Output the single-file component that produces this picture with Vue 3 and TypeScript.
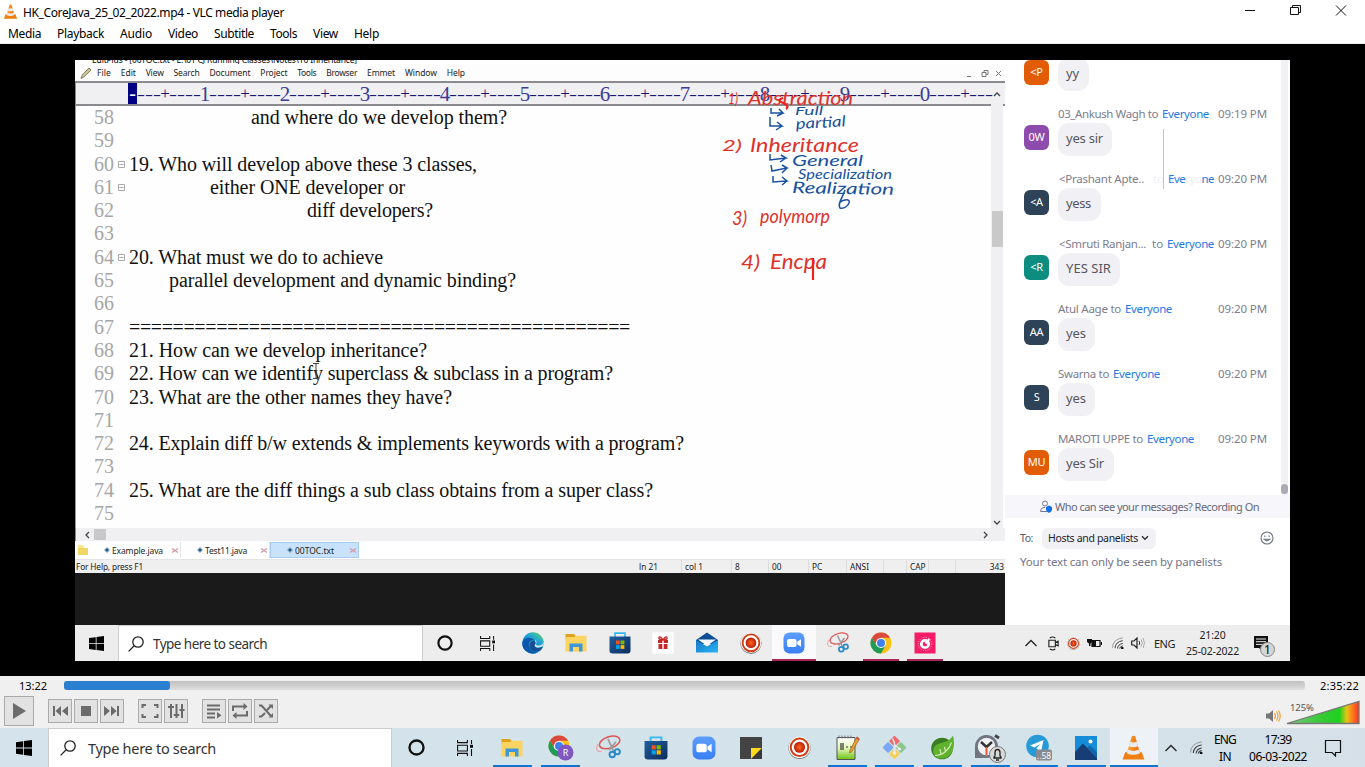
<script setup lang="ts">
import type { Directive } from 'vue'

// Tracks a run of text so that it spans the given width in pixels.
const vFit: Directive<HTMLElement, number | undefined> = {
  mounted(el, { value }) {
    const count = (el.textContent ?? '').length
    if (!value || !count) return
    const natural = el.getBoundingClientRect().width
    el.style.letterSpacing = `${(value - natural) / count}px`
  },
}

interface Label { text: string; w: number }
interface CodeLine { no: number; text?: string; indent?: number; w?: number; fold?: boolean }
interface Message {
  initials: string; color: string; name?: string; nameW?: number
  wide?: boolean; erased?: boolean; time?: string; text: string; w: number; bubble: number
}
interface Task { icon: string; size?: number; state?: string }
interface Note { text: string; x: number; y: number; size: number; w: number; tilt?: number }

const menus: Label[] = [
  { text: 'Media', w: 33 }, { text: 'Playback', w: 47 }, { text: 'Audio', w: 32 }, { text: 'Video', w: 30 },
  { text: 'Subtitle', w: 40 }, { text: 'Tools', w: 27 }, { text: 'View', w: 25 }, { text: 'Help', w: 25 },
]
const editorMenus: Label[] = [
  { text: 'File', w: 14 }, { text: 'Edit', w: 15 }, { text: 'View', w: 18 }, { text: 'Search', w: 26 },
  { text: 'Document', w: 41 }, { text: 'Project', w: 27 }, { text: 'Tools', w: 19 }, { text: 'Browser', w: 31 },
  { text: 'Emmet', w: 28 }, { text: 'Window', w: 32 }, { text: 'Help', w: 18 },
]
const ruler: string[] = Array.from({ length: 107 }, (_, i) => {
  const n = i + 1
  if ((n + 1) % 10 === 0) return String(((n + 1) / 10) % 10)
  return (n + 1) % 5 === 0 ? '+' : '-'
})
const lines: CodeLine[] = [
  { no: 58, text: 'and where do we develop them?', indent: 122, w: 256 },
  { no: 59 },
  { no: 60, text: '19. Who will develop above these 3 classes,', w: 348, fold: true },
  { no: 61, text: 'either ONE developer or', indent: 81, w: 195, fold: true },
  { no: 62, text: 'diff developers?', indent: 178, w: 126 },
  { no: 63 },
  { no: 64, text: '20. What must we do to achieve', w: 254, fold: true },
  { no: 65, text: 'parallel development and dynamic binding?', indent: 40, w: 347 },
  { no: 66 },
  { no: 67, text: '='.repeat(46), w: 501 },
  { no: 68, text: '21. How can we develop inheritance?', w: 298 },
  { no: 69, text: '22. How can we identify superclass & subclass in a program?', w: 484 },
  { no: 70, text: '23. What are the other names they have?', w: 323 },
  { no: 71 },
  { no: 72, text: '24. Explain diff b/w extends & implements keywords with a program?', w: 555 },
  { no: 73 },
  { no: 74, text: '25. What are the diff things a sub class obtains from a super class?', w: 524 },
  { no: 75 },
]
const tabs: Label[] = [
  { text: 'Example.java', w: 51 }, { text: 'Test11.java', w: 42 }, { text: '00TOC.txt', w: 39 },
]
const status = ['ln 21', 'col 1', '8', '00', 'PC', 'ANSI', '', 'CAP', '', '343']

const redNotes: Note[] = [
  { text: '1)', x: 728, y: 104, size: 15, w: 10 },
  { text: 'Abstraction', x: 748, y: 105, size: 19, w: 105 },
  { text: '2)', x: 722, y: 151, size: 16, w: 20 },
  { text: 'Inheritance', x: 750, y: 152, size: 19, w: 109 },
  { text: '3)', x: 732, y: 225, size: 20, w: 15 },
  { text: 'polymorp', x: 760, y: 223, size: 19, w: 70 },
  { text: '4)', x: 741, y: 269, size: 20, w: 19 },
  { text: 'Encpa', x: 770, y: 269, size: 21, w: 57 },
]
const blueNotes: Note[] = [
  { text: 'Full', x: 795, y: 115, size: 11, w: 28 },
  { text: 'partial', x: 796, y: 129, size: 15, w: 50, tilt: -3 },
  { text: 'General', x: 792, y: 166, size: 15, w: 71 },
  { text: 'Specialization', x: 798, y: 179, size: 13, w: 94 },
  { text: 'Realization', x: 792, y: 193, size: 16, w: 102, tilt: 1 },
]

const messages: Message[] = [
  { initials: '<P', color: 'orange', text: 'yy', w: 13, bubble: 31 },
  { initials: '0W', color: 'purple', name: '03_Ankush Wagh to', nameW: 100, time: '09:19 PM', text: 'yes sir', w: 37, bubble: 54 },
  { initials: '<A', color: 'navy', name: '<Prashant Apte..', nameW: 85, wide: true, erased: true, time: '09:20 PM', text: 'yess', w: 25, bubble: 43 },
  { initials: '<R', color: 'teal', name: '<Smruti Ranjan...', nameW: 87, wide: true, time: '09:20 PM', text: 'YES SIR', w: 45, bubble: 62 },
  { initials: 'AA', color: 'navy', name: 'Atul Aage to', nameW: 63, time: '09:20 PM', text: 'yes', w: 20, bubble: 37 },
  { initials: 'S', color: 'navy', name: 'Swarna to', nameW: 51, time: '09:20 PM', text: 'yes', w: 20, bubble: 37 },
  { initials: 'MU', color: 'orange', name: 'MAROTI UPPE to', nameW: 85, time: '09:20 PM', text: 'yes Sir', w: 38, bubble: 56 },
]

const innerTasks: Task[] = [
  { icon: 'edge' }, { icon: 'folder' }, { icon: 'store' }, { icon: 'gift' }, { icon: 'mail' }, { icon: 'record' },
  { icon: 'zoom', state: 'active' }, { icon: 'snip' }, { icon: 'chrome', state: 'open' }, { icon: 'gauge', state: 'open' },
]
const outerTasks: Task[] = [
  { icon: 'folder', state: 'open' }, { icon: 'chrome-r', size: 27, state: 'open' }, { icon: 'snip', size: 25 },
  { icon: 'store', size: 24 }, { icon: 'zoom', size: 24 }, { icon: 'sticky' }, { icon: 'record', size: 23 },
  { icon: 'notepad', size: 25, state: 'open' }, { icon: 'git', size: 25, state: 'open' }, { icon: 'spring', size: 25, state: 'open' },
  { icon: 'alarm', size: 32, state: 'open' }, { icon: 'telegram', size: 27, state: 'open' }, { icon: 'photos', size: 24, state: 'open' },
  { icon: 'vlc', size: 25, state: 'active' },
]
const controlGroups: string[][] = [['prev', 'stop', 'next'], ['full', 'sliders'], ['list', 'loop', 'shuffle']]
</script>

<template>
  <div class="window">
    <svg class="defs" width="0" height="0">
      <defs>
        <linearGradient id="gEdge" x1="0" y1="1" x2="1" y2="0"><stop offset="0" stop-color="#0b62b8" /><stop offset=".5" stop-color="#1ba0dc" /><stop offset="1" stop-color="#5fd86a" /></linearGradient>
        <linearGradient id="gStore" x1="0" y1="0" x2="1" y2="1"><stop offset="0" stop-color="#1f5f9f" /><stop offset="1" stop-color="#0e2c5c" /></linearGradient>
        <linearGradient id="gZoom" x1="0" y1="0" x2="0" y2="1"><stop offset="0" stop-color="#5c9dff" /><stop offset="1" stop-color="#3a80f5" /></linearGradient>
        <linearGradient id="gMail" x1="0" y1="0" x2="1" y2="1"><stop offset="0" stop-color="#1576c8" /><stop offset="1" stop-color="#28b4f4" /></linearGradient>
        <radialGradient id="gRec"><stop offset="0" stop-color="#ff6a1c" /><stop offset="1" stop-color="#b81c08" /></radialGradient>
        <linearGradient id="gVol"><stop offset="0" stop-color="#7bc87b" /><stop offset=".5" stop-color="#34c934" /><stop offset=".73" stop-color="#1fd21f" /><stop offset=".83" stop-color="#eac315" /><stop offset=".93" stop-color="#ff6a20" /><stop offset="1" stop-color="#ff3018" /></linearGradient>
        <linearGradient id="gNote" x1="0" y1="0" x2="0" y2="1"><stop offset="0" stop-color="#fff" /><stop offset=".5" stop-color="#dff5b4" /><stop offset="1" stop-color="#6cc312" /></linearGradient>
        <linearGradient id="gCone"><stop offset="0" stop-color="#ffa53a" /><stop offset="1" stop-color="#e86a00" /></linearGradient>
      </defs>
      <symbol id="i-start" viewBox="0 0 16 16"><path d="M0 2.2 7.2 1.2V7.6H0ZM8 1.1 16 0V7.6H8ZM0 8.4H7.2V14.8L0 13.8ZM8 8.4H16V16L8 14.9Z" /></symbol>
      <symbol id="i-search" viewBox="0 0 16 16"><circle cx="10" cy="6" r="5.2" fill="none" stroke="#222" stroke-width="1.3" /><path d="M6.2 9.8 .6 15.4" stroke="#222" stroke-width="1.3" /></symbol>
      <symbol id="i-cortana" viewBox="0 0 16 16"><circle cx="8" cy="8" r="6.6" fill="none" stroke="#111" stroke-width="2.2" /></symbol>
      <symbol id="i-taskview" viewBox="0 0 16 16"><path d="M.6 0V2.6H10.4V0M.6 16V13.4H10.4V16M.6 5.2H10.4V11H.6ZM14.5 0V4M14.5 9V16" fill="none" stroke="#111" stroke-width="1.1" /><path d="M13 4.8h3v3h-3z" fill="#111" /></symbol>
      <symbol id="i-edge" viewBox="0 0 22 22"><circle cx="11" cy="11" r="10.7" fill="url(#gEdge)" /><path d="M.4 11C1 5.5 9 4 12.5 8.3 9 7.5 6.5 10 7 13.5 7.5 18 12 21 16 20.3 8 24-.5 18.5.4 11Z" fill="#0c58ad" /><path d="M12.6 8.5C15 11 13 12.3 12.6 13.7 13.2 16.2 17.5 16.7 21 14.5 18 21.5 10.5 20.5 8.5 16.5 6.5 12.5 9 8 12.6 8.5Z" fill="#164d93" /><path d="M12.6 8.5C15 11 13 12.3 12.6 13.7 14 16 18 16 21 13.8L21.6 11 17 8Z" fill="#ededed" opacity=".85" /><path d="M2 6.5C5 .5 14-1.5 19 4.5 23 9.5 21.5 13.2 17.5 13.5 15 13.5 13.5 13 14.2 12 15.5 9 12.5 5.5 8.5 5.3 5.5 5.2 3 6 2 6.5Z" fill="url(#gEdge)" /></symbol>
      <symbol id="i-folder" viewBox="0 0 22 22"><path d="M.5 2H9l2 2.5V7H.5Z" fill="#dfa21a" /><path d="M.5 5H9.5L11 3.8H21.5V19.5H.5Z" fill="#fcd462" /><path d="M4.5 19.5V11.5H17.5V19.5H14V15H8V19.5Z" fill="#3d97d9" /></symbol>
      <symbol id="i-store" viewBox="0 0 22 22"><path d="M6 5V1.2H16V5" fill="none" stroke="#37b7ee" stroke-width="1.7" /><path d="M.5 4.5H21.5V18.5Q21.5 21.5 18.5 21.5H3.5Q.5 21.5.5 18.5Z" fill="url(#gStore)" /><path d="M7 8.5h3.8v3.8H7z" fill="#f25022" /><path d="M11.6 8.5h3.8v3.8h-3.8z" fill="#7fba00" /><path d="M7 13.1h3.8v3.8H7z" fill="#00a4ef" /><path d="M11.6 13.1h3.8v3.8h-3.8z" fill="#ffb900" /></symbol>
      <symbol id="i-gift" viewBox="0 0 22 22"><path d="M.3.3h21.4v21.4H.3z" fill="#fff" /><path d="M6 8h4.3v3H6zM11.7 8H16v3h-4.3zM6.5 12h3.8v5H6.5zM11.7 12h3.8v5h-3.8z" fill="#c5262a" /><path d="M11 8Q6 7.5 7 5.5T11 8Q16 7.5 15 5.5T11 8Z" fill="none" stroke="#c5262a" stroke-width="1.3" /></symbol>
      <symbol id="i-mail" viewBox="0 0 22 22"><path d="M0 8 11 .5 22 8V12H0Z" fill="#0d4d94" /><path d="M0 8 11 14.5 22 8V20.5H0Z" fill="url(#gMail)" /><path d="M2 7.5H20L11 14Z" fill="#f4f8fb" /></symbol>
      <symbol id="i-record" viewBox="0 0 22 22"><circle cx="11" cy="11.3" r="10.6" fill="#777" /><circle cx="11" cy="10.8" r="10.3" fill="#fff" /><circle cx="11" cy="10.8" r="8.4" fill="none" stroke="#cf3d14" stroke-width="1.9" /><circle cx="11" cy="10.8" r="5.3" fill="url(#gRec)" /></symbol>
      <symbol id="i-zoom" viewBox="0 0 22 22"><rect x=".5" y=".5" width="21" height="21" rx="6" fill="url(#gZoom)" /><rect x="4" y="7" width="9.5" height="8" rx="2" fill="#fff" /><path d="M14.2 9.7 18 7.2V14.8L14.2 12.3Z" fill="#fff" /></symbol>
      <symbol id="i-snip" viewBox="0 0 22 22"><g fill="none"><ellipse cx="12" cy="6.5" rx="9.3" ry="5" transform="rotate(-18 12 6.5)" stroke="#e05555" stroke-width="1.3" /><path d="M2 8C-1 12 .5 15 5 14.5" stroke="#eda0a0" stroke-width="1" /><path d="M10.5 3.5 15.3 14M17.5 6 11.5 13.5" stroke="#9a9a9a" stroke-width="1.5" /><circle cx="14.3" cy="17.2" r="2.4" stroke="#2a8ac7" stroke-width="1.7" /><circle cx="18.7" cy="14.7" r="2.3" stroke="#2a8ac7" stroke-width="1.7" /></g></symbol>
      <symbol id="i-chrome" viewBox="0 0 22 22"><circle cx="11" cy="11" r="10.5" fill="#fbc116" /><path d="M20.1 5.75H11V11H5L1.9 5.75A10.5 10.5 0 0 1 20.1 5.75Z" fill="#dc4a3d" /><path d="M1.9 5.75 6.5 13.6 11 15.5 15.5 13.6 11 21.5A10.5 10.5 0 0 1 1.9 5.75Z" fill="#1e9b57" /><circle cx="11" cy="11" r="5.1" fill="#fff" /><circle cx="11" cy="11" r="4" fill="#3f80ec" /></symbol>
      <symbol id="i-chrome-r" viewBox="0 0 27 27"><use href="#i-chrome" x="1" y="1" width="22" height="22" /><circle cx="18.5" cy="18.5" r="8" fill="#7e57c2" /><text x="18.5" y="22" text-anchor="middle" class="badge-letter">R</text></symbol>
      <symbol id="i-gauge" viewBox="0 0 22 22"><path d="M.5.5h21v21H.5z" fill="#f81b66" /><circle cx="11" cy="12" r="3.7" fill="none" stroke="#fff" stroke-width="2.8" /><path d="M11.5 11.5 15.5 7" stroke="#fff" stroke-width="2" /><circle cx="11" cy="12" r="6.7" fill="none" stroke="#ffd5e3" stroke-width=".8" stroke-dasharray="1 1.3" /></symbol>
      <symbol id="i-sticky" viewBox="0 0 22 22"><path d="M0 0h22v11L11 22H0Z" fill="#434343" /><path d="M11 22V11H22Z" fill="#ffda1c" /><path d="M22 11V22H11Z" fill="#3a3a3a" /></symbol>
      <symbol id="i-notepad" viewBox="0 0 25 25"><path d="M2 2.5h18v22H2z" fill="url(#gNote)" stroke="#555" /><path d="M4 .5v3M7 .5v3M10 .5v3M13 .5v3M16 .5v3" stroke="#777" stroke-width="1" /><path d="M6 8v7M8 8v7M11 12h2M15 12h2" stroke="#333" stroke-width="1.2" /><path d="M22 2 24.5 4 17 16.5 14.5 18 15 15Z" fill="#eda22e" stroke="#8d531c" stroke-width=".6" /><path d="M22 1.5 24.5 3.5 23.5 5.2 21 3.3Z" fill="#d94f45" /></symbol>
      <symbol id="i-git" viewBox="0 0 25 25"><g transform="rotate(45 12.5 12.5)"><rect x="4" y="4" width="8" height="8" rx="1" fill="#ed6a6f" /><rect x="13" y="4" width="8" height="8" rx="1" fill="#89c78c" /><rect x="4" y="13" width="8" height="8" rx="1" fill="#78a8f5" /><rect x="13" y="13" width="8" height="8" rx="1" fill="#f5cf58" /></g><path d="M10.5 3.5 12.5 8V18M13 10 17.5 14" fill="none" stroke="#e8e8e8" stroke-width="1.5" /><circle cx="12.5" cy="18" r="1.8" fill="#eee" /><circle cx="17.5" cy="14" r="1.6" fill="#eee" /></symbol>
      <symbol id="i-spring" viewBox="0 0 25 25"><circle cx="12" cy="13.5" r="10.8" fill="#397d22" /><path d="M23 .5C26 12 22 21.5 14 23.3 6 25 1 18 4 12.5 7.5 6 18 9.5 23 .5Z" fill="#5fb22e" /><path d="M5 20.5C13 20.5 19 15 21.5 7.5M11 19.5 10 14M15.5 16.5 14.5 12" fill="none" stroke="#d5ecb4" stroke-width="1.2" /></symbol>
      <symbol id="i-alarm" viewBox="0 0 32 32"><path d="M21 3.5 25 6" stroke="#444" stroke-width="3" /><path d="M1 26V15A11.5 11.5 0 1 1 12.5 26Z" fill="#707580" /><circle cx="12.5" cy="14.5" r="8.7" fill="#f0f2f3" /><path d="M7 10 12.5 15 18 10" fill="none" stroke="#333" stroke-width="2.5" /><path d="M12.5 15V23" stroke="#df5b34" stroke-width="2" /><circle cx="23.5" cy="22.5" r="8" fill="#d9d9d9" stroke="#777" /><path d="M20 26V25L21 24V20.5Q21 17.5 23.5 17.5T26 20.5V24L27 25V26ZM22 28H25" fill="none" stroke="#222" stroke-width="1.3" /></symbol>
      <symbol id="i-telegram" viewBox="0 0 27 27"><circle cx="12.5" cy="12" r="11.3" fill="#279bd8" /><path d="M5 11.5 18.5 6 16 18 11.5 14.5 15 10 9.5 13.5Z" fill="#fff" /><rect x="11" y="15.5" width="16" height="11" rx="2" fill="#858b90" /><text x="19" y="24.5" text-anchor="middle" class="badge-count">..58</text></symbol>
      <symbol id="i-photos" viewBox="0 0 24 24"><path d="M1 0h22v24H1z" fill="#168bd8" /><path d="M1 16 9 7.5 23 22V24H1Z" fill="#173d75" /><path d="M13 11.5 16 9.5 23 16V22Z" fill="#1565ad" /><circle cx="16.5" cy="5.5" r="2" fill="#fff" /></symbol>
      <symbol id="i-vlc" viewBox="0 0 24 24"><path d="M4 16.5H20L22.5 23.5H1.5Z" fill="#ef8010" /><path d="M10.3 1.5Q12 0 13.7 1.5L18.5 18Q12 21.5 5.5 18Z" fill="url(#gCone)" /><path d="M8.8 6.5Q12 8 15.2 6.5L16.4 10.7Q12 12.7 7.6 10.7ZM6.7 14Q12 16.5 17.3 14L18.3 17.5Q12 20.5 5.7 17.5Z" fill="#e9eaec" /></symbol>
      <symbol id="i-up" viewBox="0 0 14 14"><path d="M1.5 10 7 4.5 12.5 10" fill="none" stroke="#222" stroke-width="1.3" /></symbol>
      <symbol id="i-wifi" viewBox="0 0 14 14"><g fill="none"><path d="M.5 12.5Q1 2.5 12.5 1" stroke="#8c9194" /><path d="M3.5 13Q4 5.5 12.5 4.3M6.5 13.5Q7 8.5 12.5 7.5" stroke="#333" stroke-width="1.1" /><path d="M9 13.5Q9.3 11 12.5 10.3" stroke="#333" stroke-width="1.1" /></g><circle cx="12" cy="13" r="1.5" fill="#111" /></symbol>
      <symbol id="c-play" viewBox="0 0 18 18"><path d="M3 1 16 9 3 17Z" /></symbol>
      <symbol id="c-prev" viewBox="0 0 18 18"><path d="M2 4h2v10H2zM10 4v10L4.5 9ZM17 4v10L11 9Z" /></symbol>
      <symbol id="c-stop" viewBox="0 0 18 18"><path d="M4 4h10v10H4z" /></symbol>
      <symbol id="c-next" viewBox="0 0 18 18"><path d="M16 4h-2v10h2zM8 4v10L13.5 9ZM1 4v10L7 9Z" /></symbol>
      <symbol id="c-full" viewBox="0 0 18 18"><path d="M1.5 6V3H5M13 3H16.5V6M16.5 12V15H13M5 15H1.5V12" fill="none" stroke="#6b6b6b" stroke-width="2" /></symbol>
      <symbol id="c-sliders" viewBox="0 0 18 18"><path d="M4 2V16M9.5 2V16M15 2V16M1 5H7M6.8 13H12.2M12.5 8H17.5" fill="none" stroke="#6b6b6b" stroke-width="2" /></symbol>
      <symbol id="c-list" viewBox="0 0 18 18"><path d="M2 3.5H15M2 7.5H15M2 11.5H10M2 15.5H10" stroke="#6b6b6b" stroke-width="1.9" /><path d="M12 10 16.5 13.2 12 16.5Z" /></symbol>
      <symbol id="c-loop" viewBox="0 0 18 18"><path d="M2 9V4.5H13M16 9V13.5H5" fill="none" stroke="#6b6b6b" stroke-width="2" /><path d="M12.5 1 16.5 4.5 12.5 8ZM5.5 10 1.5 13.5 5.5 17Z" /></symbol>
      <symbol id="c-shuffle" viewBox="0 0 18 18"><path d="M2 3.5H4.5L14 14M2 14.5H4.5L8 11M10 8 14 4" fill="none" stroke="#6b6b6b" stroke-width="2" /><path d="M11.5 2.5H16V7ZM11.5 15.5H16V11Z" /></symbol>
    </svg>

    <header class="title-bar">
      <svg class="app-icon"><use href="#i-vlc" /></svg>
      <span v-fit="261" class="t">HK_CoreJava_25_02_2022.mp4 - VLC media player</span>
      <svg class="window-controls" viewBox="0 0 110 20" fill="none" stroke="#111">
        <path d="M5 10.5H15M50.500 7.500H58.500V14.500H50.500ZM52.500 7V5.500H60.500V12.500H59M96 5.500 106 15.500M106 5.500 96 15.500" />
      </svg>
    </header>
    <nav class="menu-bar">
      <span v-for="m in menus" :key="m.text" v-fit="m.w" class="t">{{ m.text }}</span>
    </nav>

    <main class="video">
      <div class="recording">
        <section class="editor">
          <div class="editor-title"><span v-fit="265" class="t">EditPlus - [00TOC.txt - E:\01 CJ Running Classes\Notes\10 Inheritance]</span></div>
          <nav class="editor-menu">
            <svg class="pencil" viewBox="0 0 12 12"><path d="M1 11.5 2.2 8 9 1 11 3 4 9.8Z" fill="#cfc894" stroke="#68624a" stroke-width=".8" /></svg>
            <span v-for="m in editorMenus" :key="m.text" v-fit="m.w" class="t">{{ m.text }}</span>
            <svg class="mdi" viewBox="0 0 40 14"><path d="M3 10.5H7M18 6.5H22V10.5H18ZM20 6V4.5H24V8.5H22.5M32 5 37 10M37 5 32 10" fill="none" stroke="#777" stroke-width="1" /></svg>
          </nav>
          <div class="ruler">
            <span class="caret-cell">-</span>
            <span v-for="(c, i) in ruler" :key="i" class="cell" :class="{ num: c > '/', dash: c === '-', plus: c === '+' }">{{ c }}</span>
          </div>
          <div class="document">
            <div class="code">
              <div v-for="l in lines" :key="l.no" class="line">
                <span class="no">{{ l.no }}</span>
                <span class="fold"><svg v-if="l.fold" viewBox="0 0 7 7"><path d="M.5.5H6.5V6.5H.5ZM1.5 3.5H5.5" fill="none" stroke="#aaa" /></svg></span>
                <span v-if="l.text" v-fit="l.w" class="t" :style="{ marginLeft: (l.indent ?? 0) + 'px' }">{{ l.text }}</span>
              </div>
            </div>
            <div class="v-scroll">
              <svg viewBox="0 0 8 6"><path d="M1 5 4 2 7 5" /></svg>
              <i></i>
              <svg class="down" viewBox="0 0 8 6"><path d="M1 1 4 4 7 1" /></svg>
            </div>
          </div>
          <div class="h-scroll">
            <svg viewBox="0 0 6 8"><path d="M5 1 2 4 5 7" /></svg><i></i>
            <svg class="right" viewBox="0 0 6 8"><path d="M1 1 4 4 1 7" /></svg>
          </div>
          <div class="file-tabs">
            <svg class="dir" viewBox="0 0 12 12"><path d="M1 1H6L7 3V11H1Z" fill="#f8e58d" /><path d="M1 4H11V11H1Z" fill="#f1d665" /></svg>
            <div v-for="(t, i) in tabs" :key="t.text" class="file-tab" :class="['tab' + i]">
              <svg class="dot" viewBox="0 0 6 6"><path d="M3 0 6 3 3 6 0 3Z" fill="#7ba0bd" /><circle cx="3" cy="3" r="1.3" fill="#235680" /></svg>
              <span v-fit="t.w" class="t">{{ t.text }}</span>
              <svg class="close" viewBox="0 0 8 7"><path d="M1 1.500 7 5.500M7 1.500 1 5.500" stroke="#d39aa6" stroke-width="1.4" /></svg>
            </div>
          </div>
          <div class="status-bar">
            <span class="help"><span v-fit="67" class="t">For Help, press F1</span><span class="t">{{ status[0] }}</span></span>
            <span v-for="(s, i) in status.slice(1)" :key="i" class="field">{{ s }}</span>
          </div>
          <svg class="ink" viewBox="680 60 240 230">
            <g class="red">
              <text v-for="n in redNotes" :key="n.text" :x="n.x" :y="n.y" :font-size="n.size" :textLength="n.w" lengthAdjust="spacingAndGlyphs">{{ n.text }}</text>
            </g>
            <g class="blue">
              <text v-for="n in blueNotes" :key="n.text" :x="n.x" :y="n.y" :font-size="n.size" :textLength="n.w" lengthAdjust="spacingAndGlyphs" :transform="`rotate(${n.tilt ?? 0} ${n.x} ${n.y})`">{{ n.text }}</text>
              <path d="M771 108V113H783L779 109M783 113 777 116M770 117V126H782L777 122M782 126 776 130M770 154V160L786 158 781 155M786 158 780 162M771 165 772 171 787 168 782 165M787 168 782 173M773 176V182L787 181 782 177M787 181 782 185" />
              <path d="M845 190C843 197 837 204 840 208C846 210 852 201 848 200Q844 199 839 203" />
            </g>
            <path class="overwrite" d="M783 98Q776 100 783 103T786 109M813 258V280" />
          </svg>
          <svg class="text-cursor" viewBox="0 0 8 16"><path d="M1 .5H7M1 15.5H7M4 1V15" stroke="#444" fill="none" /></svg>
        </section>

        <aside class="chat">
          <div class="messages">
            <div class="thread">
              <article v-for="(m, i) in messages" :key="i" class="message">
                <div class="avatar" :class="m.color">{{ m.initials }}</div>
                <div class="body">
                  <div class="meta" :class="{ wide: m.wide, erased: m.erased }">
                    <span v-fit="m.nameW" class="t">{{ m.name }}</span>
                    <span v-if="m.wide" class="t to">to</span>
                    <span v-if="m.erased" v-fit="46" class="t everyone">Eve<i>ryo</i>ne</span>
                    <span v-else-if="m.time" v-fit="47" class="t everyone">Everyone</span>
                    <span v-if="m.time" v-fit="49" class="t time">{{ m.time }}</span>
                  </div>
                  <div class="bubble" :style="{ width: m.bubble + 'px' }"><span v-fit="m.w" class="t">{{ m.text }}</span></div>
                </div>
              </article>
            </div>
            <div class="chat-scroll"><i></i></div>
            <div class="stroke-mark"></div>
          </div>
          <div class="privacy">
            <svg viewBox="0 0 13 13"><circle cx="5" cy="3.5" r="2.5" fill="none" stroke="#747487" /><path d="M7 11.5H.7Q.5 7.5 5 7.5" fill="none" stroke="#747487" /><path d="M9 5.5 12 7V9.5Q12 11.5 9 13 6 11.5 6 9.5V7Z" fill="#0e72ed" /></svg>
            <span v-fit="204" class="t">Who can see your messages? Recording On</span>
          </div>
          <div class="compose">
            <div class="recipient">
              <span v-fit="13" class="t">To:</span>
              <div class="select"><span v-fit="90" class="t">Hosts and panelists</span><svg viewBox="0 0 8 6"><path d="M1 1.2 4 4.2 7 1.2" fill="none" stroke="#333" stroke-width="1.5" /></svg></div>
              <svg class="smile" viewBox="0 0 14 14" fill="none" stroke="#6e7680" stroke-width="1.1"><circle cx="7" cy="7" r="6" /><path d="M4 8.2Q7 11.5 10 8.2ZM4.8 4.5V6M9.2 4.5V6" /></svg>
            </div>
            <span v-fit="202" class="t">Your text can only be seen by panelists</span>
          </div>
        </aside>

        <footer class="taskbar inner">
          <div class="start"><svg><use href="#i-start" /></svg></div>
          <div class="search"><svg><use href="#i-search" /></svg><span v-fit="114" class="t">Type here to search</span></div>
          <div class="task sys"><svg width="16" height="16"><use href="#i-cortana" /></svg></div>
          <div class="task sys"><svg width="15" height="15"><use href="#i-taskview" /></svg></div>
          <div class="tasks">
            <div v-for="t in innerTasks" :key="t.icon" class="task" :class="t.state"><svg width="22" height="22"><use :href="'#i-' + t.icon" /></svg></div>
          </div>
          <div class="tray">
            <svg class="up"><use href="#i-up" /></svg>
            <svg class="cam" viewBox="0 0 14 16" fill="none" stroke="#222" stroke-width="1.2"><path d="M2 4.5H9V11.5H2ZM9 7 12 5.5V10.5L9 9M3 2Q6 0 9 2M3 14Q6 16 9 14" /></svg>
            <svg class="rec"><use href="#i-record" /></svg>
            <svg class="bat" viewBox="0 0 15 12"><path d="M5 3.5H13V9.5H5ZM14.5 5V8" fill="none" stroke="#111" stroke-width="1.2" /><path d="M5 4H9V9.5H5ZM0 2H5V5L3.5 6.5V9H2V6.5L0 5Z" fill="#111" /></svg>
            <svg class="wifi"><use href="#i-wifi" /></svg>
            <svg class="snd" viewBox="0 0 15 12" fill="none"><path d="M.7 4H3L6 1V11L3 8H.7Z" stroke="#222" stroke-width="1.2" /><path d="M8 4Q9.5 6 8 8" stroke="#333" /><path d="M10 2.5Q12.5 6 10 9.5M12 1Q15 6 12 11" stroke="#aaa" /></svg>
            <span v-fit="21" class="t">ENG</span>
            <div class="clock"><span v-fit="26" class="t">21:20</span><span v-fit="53" class="t">25-02-2022</span></div>
            <svg class="note" viewBox="0 0 24 24"><path d="M1 2H15V14H10V18L6 14H1Z" fill="#111" /><path d="M3 5H13M3 7.7H13M3 10.4H10" stroke="#eee" /><circle cx="14.5" cy="15.5" r="7" fill="#d5d5d5" stroke="#888" /><text x="14.5" y="19.5" text-anchor="middle">1</text></svg>
          </div>
        </footer>
      </div>
    </main>

    <section class="controls">
      <div class="seek">
        <span v-fit="28" class="t">13:22</span>
        <div class="track"><i></i></div>
        <span v-fit="39" class="t">2:35:22</span>
      </div>
      <div class="buttons">
        <button class="big"><svg><use href="#c-play" /></svg></button>
        <div v-for="(g, i) in controlGroups" :key="i" class="group">
          <button v-for="b in g" :key="b"><svg><use :href="'#c-' + b" /></svg></button>
        </div>
        <svg class="volume" viewBox="0 0 97 27">
          <path d="M2 14.5H5L9 11V23L5 19.5H2Z" fill="#777" />
          <path d="M10.5 14Q12.500 17 10.500 20M12.500 12.500Q15.500 17 12.500 21.500M14.500 11.500Q18 17 14.500 22.500" fill="none" stroke="#f29b30" stroke-width="1.1" />
          <path d="M23 24.5 95 2.500V24.500Z" fill="url(#gVol)" stroke="#777" stroke-width="1.3" />
          <text x="26" y="11.5" textLength="24">125%</text>
        </svg>
      </div>
    </section>

    <footer class="taskbar outer">
      <div class="start"><svg><use href="#i-start" /></svg></div>
      <div class="search"><svg><use href="#i-search" /></svg><span v-fit="128" class="t">Type here to search</span></div>
      <div class="tasks">
        <div class="task"><svg width="17" height="17"><use href="#i-cortana" /></svg></div>
        <div class="task"><svg width="16" height="16"><use href="#i-taskview" /></svg></div>
        <div v-for="t in outerTasks" :key="t.icon" class="task" :class="t.state"><svg :width="t.size ?? 22" :height="t.size ?? 22"><use :href="'#i-' + t.icon" /></svg></div>
      </div>
      <div class="tray">
        <svg class="up"><use href="#i-up" /></svg>
        <svg class="wifi"><use href="#i-wifi" /></svg>
        <div class="lang"><span v-fit="22" class="t">ENG</span><span v-fit="12" class="t">IN</span></div>
        <div class="clock"><span v-fit="27" class="t">17:39</span><span v-fit="58" class="t">06-03-2022</span></div>
        <svg class="note" viewBox="0 0 18 18"><path d="M1.5 1.5H16.5V13.5H11.5V17L8 13.5H1.5Z" fill="none" stroke="#111" stroke-width="1.2" /></svg>
      </div>
    </footer>
  </div>
</template>

<style scoped>
.window { display: flex; flex-direction: column; width: 1365px; height: 767px; overflow: hidden; background: #fff; color: #000; font-family: "Noto Sans", "Open Sans", sans-serif; font-size: 12px; }
.defs { position: absolute; }
.t { display: inline-block; white-space: pre; flex: none; }
svg { display: block; flex: none; }
i { font-style: normal; }
.title-bar { display: flex; align-items: center; height: 24px; flex: none; padding-left: 3px; }
.app-icon { width: 15px; height: 17px; margin: 0 5px 2px 0; }
.window-controls { width: 110px; height: 20px; margin: 0 15px 4px auto; }
.menu-bar { display: flex; align-items: center; gap: 16px; height: 20px; flex: none; padding-left: 8px; border-bottom: 1px solid #eee; box-sizing: border-box; }

.video { height: 632px; flex: none; padding: 16px 75px 15px; box-sizing: border-box; background: #000; }
.recording { display: grid; grid-template: 565px 36px / 930px 285px; height: 601px; }
.editor { position: relative; display: flex; flex-direction: column; background: #1a1a1a; font-size: 8.5px; }
.editor-title { height: 4px; flex: none; overflow: hidden; background: #fff; display: flex; align-items: flex-end; padding-left: 17px; line-height: 8px; }
.editor-menu { display: flex; align-items: center; gap: 9.9px; height: 17px; flex: none; background: #fdfdfd; padding-left: 5px; color: #222; }
.pencil { width: 12px; height: 12px; margin-right: -5px; }
.mdi { width: 40px; height: 14px; margin: 0 1px 0 auto; }
.ruler { display: flex; align-items: center; height: 25px; flex: none; box-sizing: border-box; border: 2px solid #8b8b8f; border-right: 0; border-left-width: 1px; background: #f0eff2; padding-left: 52px; color: #18186e; font: 20px/20px "Liberation Serif", serif; overflow: hidden; }
.caret-cell { width: 9px; height: 21px; background: #000082; color: #fff; text-align: center; flex: none; }
.cell { width: 8px; flex: none; display: flex; justify-content: center; }
.dash { transform: scale(1.2, .7); }
.plus { font-weight: 400; font-size: 17px; }
.num { color: #3c3c96; font-size: 21px; }
.document { display: flex; height: 422px; flex: none; background: #fefefe; border-left: 1px solid #999; box-sizing: border-box; }
.code { flex: 1; color: #111; font: 20px/23.3px "Liberation Serif", serif; }
.line { display: flex; align-items: center; height: 23.3px; padding-left: 18px; }
.no { color: #a6a6a6; width: 24px; }
.fold { width: 11px; height: 7px; }
.fold svg { width: 7px; height: 7px; }
.v-scroll { width: 12px; margin: -15px 2px 0 0; background: #f0eff1; display: flex; flex-direction: column; align-items: center; }
.v-scroll svg, .h-scroll svg { fill: none; stroke: #444; stroke-width: 1.3; }
.v-scroll svg { width: 8px; height: 6px; }
.v-scroll i { width: 11px; height: 36px; background: #c9c9c9; margin-top: 114px; }
.v-scroll .down { margin: auto 0 2px; }
.h-scroll { display: flex; align-items: center; height: 13px; flex: none; background: #f0eff2; padding-left: 8px; border-left: 1px solid #888; }
.h-scroll svg { width: 6px; height: 8px; }
.h-scroll i { width: 12px; height: 11px; background: #c8c7ca; margin-left: 4px; }
.h-scroll .right { margin: 0 16px 0 auto; }
.file-tabs { display: flex; height: 18px; flex: none; background: #fff; align-items: center; }
.dir { width: 12px; height: 12px; margin: 0 4px 0 2px; }
.file-tab { display: flex; align-items: center; height: 16px; width: 88px; box-sizing: border-box; border-right: 1px solid #e4e4e4; padding-left: 11px; color: #222; }
.dot { width: 6px; height: 6px; margin-right: 2px; }
.close { width: 8px; height: 7px; margin: 0 1px 0 auto; }
.tab1, .tab2 { width: 89px; padding-left: 16px; }
.tab2 { background: #c9e2fb; border: 1px solid #a5ccef; }
.status-bar { display: grid; grid-template-columns: 606px 50px 37px 40px 38px 37px 23px 22px 27px 50px; height: 14px; flex: none; background: #f0eff0; color: #222; line-height: 13px; font-size: 8.3px; border-top: 1px solid #e4e4e4; box-sizing: border-box; }
.field { padding-left: 3px; border-left: 1px solid #ddd; box-sizing: border-box; }
.help { display: flex; justify-content: space-between; padding: 0 23px 0 1px; }
.field:last-child { text-align: right; padding-right: 1px; }
.ink { position: absolute; left: 605px; top: 0; width: 240px; height: 230px; font-family: Lato, sans-serif; font-style: italic; }
.red { fill: #e0302a; }
.blue { fill: #18519f; }
.blue path { fill: none; stroke: #18519f; stroke-width: 1.5; }
.overwrite { stroke: #ee231c; stroke-width: 2.2; fill: none; }
.text-cursor { position: absolute; left: 237px; top: 303px; width: 8px; height: 16px; }

.chat { display: flex; flex-direction: column; background: #fff; color: #747487; }
.messages { position: relative; display: flex; height: 435px; flex: none; overflow: hidden; justify-content: space-between; }
.thread { margin-top: -21px; padding-left: 19px; }
.message { display: flex; height: 65px; }
.avatar { width: 25px; height: 25px; margin: 21px 9px 0 0; border-radius: 6px; color: #fff; font-size: 11px; line-height: 23px; text-align: center; letter-spacing: -.3px; }
.orange { background: #e25c05; }
.purple { background: #8e4bae; }
.navy { background: #2e4358; }
.teal { background: #0c8d7f; }
.meta { display: flex; gap: 4px; height: 19px; line-height: 19px; width: 209px; color: #7d7d8d; font-size: 11.5px; box-sizing: border-box; }
.meta.wide { padding-left: 1px; }
.to { width: 11px; margin-left: auto; }
.wide .time { margin-left: 0; }
.everyone { color: #2678e3; }
.erased .to, .everyone i { color: #eef0f5; }
.time { margin-left: auto; }
.bubble { height: 33px; border-radius: 11px; background: #f1f0f5; color: #56565f; font-size: 13px; line-height: 31px; padding-left: 8px; box-sizing: border-box; }
.chat-scroll { width: 7px; margin-right: 2px; background: #f1f0f5; display: flex; align-items: flex-end; }
.chat-scroll i { width: 7px; height: 10px; border-radius: 4px; background: #aaaab4; margin-bottom: 1px; }
.stroke-mark { position: absolute; left: 158px; top: 69px; width: 1px; height: 60px; background: #c4c4c8; }
.privacy { display: flex; align-items: center; gap: 2px; height: 23px; flex: none; background: #f6f6fb; padding-left: 35px; color: #68687a; font-size: 11px; }
.privacy svg { width: 13px; height: 13px; }
.compose { padding: 9px 16px 0 15px; font-size: 11.5px; }
.recipient { display: flex; align-items: center; height: 22px; margin-bottom: 5px; color: #55555f; font-size: 10.5px; }
.select { display: flex; align-items: center; gap: 3px; width: 114px; height: 21px; margin-left: 9px; padding-left: 6px; box-sizing: border-box; background: #f1f0f5; border-radius: 6px; color: #22222c; }
.select svg { width: 8px; height: 6px; }
.smile { width: 14px; height: 14px; margin-left: auto; }

.taskbar { display: flex; align-items: stretch; }
.taskbar > div, .task { display: flex; align-items: center; }
.taskbar > .task { height: auto; }
.task { justify-content: center; height: 100%; }
.start { justify-content: center; }
.start svg, .search svg { width: 16px; height: 16px; }
.search { background: #fff; border: 1px solid #ccc; box-sizing: border-box; border-bottom: 0; color: #333; }
.clock, .lang { display: flex; flex-direction: column; align-items: center; flex: none; }
.inner { grid-column: 1 / 3; background: #ededed; }
.inner .start { width: 43px; }
.inner .start svg { width: 15px; height: 15px; }
.inner .search { width: 305px; padding-left: 9px; gap: 9px; font-size: 13.5px; }
.inner .sys { width: 43px; }
.inner .tasks { margin-left: 2px; }
.inner .tasks .task { width: 43.55px; }
.inner .active { background: #fafafc; box-shadow: inset 0 -2px #aa2858; }
.inner .open { background: linear-gradient(#aa2858, #aa2858) center bottom / 36px 2px no-repeat; }
.inner .tray { margin-left: auto; font-size: 11px; color: #222; width: 267px; flex: none; }
.inner .tray .up { width: 14px; height: 14px; margin-left: 1px; }
.cam { width: 13px; height: 15px; margin-left: 9px; }
.rec { width: 13px; height: 13px; margin-left: 7px; }
.bat { width: 15px; height: 12px; margin-left: 7px; }
.inner .wifi { width: 12px; height: 12px; margin-left: 10px; }
.snd { width: 15px; height: 12px; margin: 0 8px 0 7px; }
.inner .clock { width: 53px; margin-left: 11px; line-height: 16px; font-size: 10.5px; }
.inner .note { width: 24px; height: 24px; margin: 5px 0 0 14px; font-size: 12px; }

.controls { height: 52px; flex: none; background: #f0f0f0; }
.seek { display: flex; align-items: center; height: 19px; padding-left: 19px; font-size: 11px; }
.track { width: 1241px; height: 9px; margin: 0 15px 0 17px; background: linear-gradient(#c0c0c0, #dedede); border-radius: 3px; }
.track i { display: block; width: 106px; height: 9px; border-radius: 3px; background: #2b7fd0; }
.buttons { display: flex; align-items: center; height: 32px; padding-left: 4px; }
button { width: 24px; height: 24px; padding: 2px; border: 1px solid #aaa; background: #e2e2e2; box-sizing: border-box; }
button svg { width: 18px; height: 18px; fill: #6b6b6b; }
button.big { width: 30px; height: 30px; padding: 5px; }
.group { display: flex; gap: 2px; margin-left: 14px; }
.volume { width: 97px; height: 27px; margin: 3px 4px 0 auto; font-size: 9.5px; fill: #555; }

.outer { height: 39px; flex: none; background: linear-gradient(90deg, #d5e4ec, #d3e3ea 70%, #d6e0e8); }
.outer .start { width: 48px; }
.outer .search { width: 344px; padding-left: 11px; gap: 12px; font-size: 14.5px; }
.outer .task { width: 47.8px; }
.outer .tasks { margin-left: 1px; }
.outer .open { background: linear-gradient(#0e76d0, #0e76d0) center bottom / 39px 2px no-repeat; }
.outer .active { background: #ecf2f6; box-shadow: inset 0 -2px #0e76d0; }
.outer .tray { margin-left: auto; width: 201px; flex: none; line-height: 17px; }
.outer .up { width: 14px; height: 14px; }
.outer .wifi { width: 13px; height: 13px; margin-left: 12px; }
.outer .lang { width: 24px; margin-left: 10px; }
.outer .clock { width: 58px; margin-left: 12px; }
.outer .note { width: 18px; height: 18px; margin-left: 17px; }
.badge-letter { fill: #fff; font: 9px "Noto Sans", sans-serif; }
.badge-count { fill: #fff; font: 8.5px "Noto Sans", sans-serif; }
</style>

<style>
body { overflow: hidden; }
</style>
